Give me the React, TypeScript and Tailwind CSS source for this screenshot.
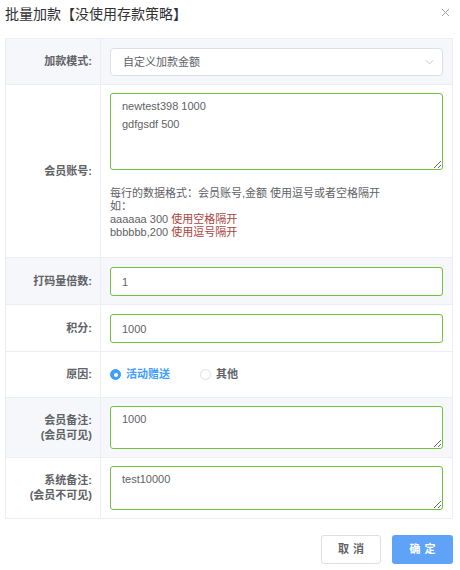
import React from 'react';

const font = { fontFamily: '"Liberation Sans", "Noto Sans CJK SC", sans-serif' };

function Row({
  label,
  grey,
  children,
  cellClass = 'pt-[9px] pb-[8px]',
}: {
  label: React.ReactNode;
  grey?: boolean;
  children: React.ReactNode;
  cellClass?: string;
}) {
  return (
    <div className={`flex border-b border-[#ebeef5] last:border-b-0 ${grey ? 'bg-[#f5f7fa]' : 'bg-white'}`}>
      <div className="w-[95px] shrink-0 border-r border-[#ebeef5] flex items-center justify-end pr-[8px] text-right text-[11px] leading-[15px] font-bold text-[#606266]">
        {label}
      </div>
      <div className={`flex-1 pl-[9px] pr-[9px] ${cellClass}`}>{children}</div>
    </div>
  );
}

function Radio({ checked, label }: { checked?: boolean; label: string }) {
  return (
    <label className="flex items-center gap-[5px]">
      <span
        className={`w-[11px] h-[11px] rounded-full flex items-center justify-center border ${
          checked ? 'bg-[#409eff] border-[#409eff]' : 'bg-white border-[#dcdfe6]'
        }`}
      >
        {checked && <span className="w-[4px] h-[4px] rounded-full bg-white" />}
      </span>
      <span className={`text-[11px] font-bold ${checked ? 'text-[#409eff]' : 'text-[#606266]'}`}>{label}</span>
    </label>
  );
}

export default function App() {
  const inputCls =
    'w-full h-[29px] border border-[#72c140] rounded-[3px] bg-white px-[11px] text-[11px] text-[#606266] outline-none';
  const areaCls =
    'block w-full border border-[#72c140] rounded-[3px] bg-white px-[11px] pt-[3px] text-[11px] leading-[18px] text-[#606266] outline-none';

  return (
    <div className="w-[460px] h-[570px] bg-white relative" style={font}>
      {/* Header */}
      <div className="flex items-center justify-between h-[28px] pl-[5px] pr-[10px]">
        <h2 className="text-[14px] font-normal text-[#303133] leading-[28px]">批量加款【没使用存款策略】</h2>
        <svg width="9" height="9" viewBox="0 0 10 10" className="-mt-[4px]">
          <path d="M1 1L9 9M9 1L1 9" stroke="#909399" strokeWidth="1" />
        </svg>
      </div>

      {/* Form table */}
      <div className="mt-[10px] mx-[5px] w-[448px] border border-[#ebeef5]">
        <Row label="加款模式:" grey>
          <div className="h-[28px] border border-[#dcdfe6] rounded-[4px] bg-white flex items-center justify-between pl-[12px] pr-[8px]">
            <span className="text-[11px] text-[#606266]">自定义加款金额</span>
            <svg width="9" height="6" viewBox="0 0 10 6">
              <path d="M1 1L5 5L9 1" fill="none" stroke="#c0c4cc" strokeWidth="1" />
            </svg>
          </div>
        </Row>

        <Row label="会员账号:" cellClass="pt-[8px] pb-[18px]">
          <textarea className={`${areaCls} h-[77px]`} defaultValue={'newtest398 1000\ngdfgsdf 500'} />
          <div className="mt-[17px] text-[11px] leading-[13px] text-[#606266]">
            <div>每行的数据格式：会员账号,金额 使用逗号或者空格隔开</div>
            <div>如：</div>
            <div>
              aaaaaa 300 <span className="text-[#a94442]">使用空格隔开</span>
            </div>
            <div>
              bbbbbb,200 <span className="text-[#a94442]">使用逗号隔开</span>
            </div>
          </div>
        </Row>

        <Row label="打码量倍数:" grey>
          <input className={inputCls} defaultValue="1" />
        </Row>

        <Row label="积分:">
          <input className={inputCls} defaultValue="1000" />
        </Row>

        <Row label="原因:" cellClass="h-[45px] flex items-center gap-[30px] pl-[8px]">
          <Radio checked label="活动赠送" />
          <Radio label="其他" />
        </Row>

        <Row
          grey
          label={
            <span>
              会员备注:
              <br />
              (会员可见)
            </span>
          }
          cellClass="py-[8px]"
        >
          <textarea className={`${areaCls} h-[43px]`} defaultValue="1000" />
        </Row>

        <Row
          label={
            <span>
              系统备注:
              <br />
              (会员不可见)
            </span>
          }
          cellClass="py-[8px]"
        >
          <textarea className={`${areaCls} h-[44px]`} defaultValue="test10000" />
        </Row>
      </div>

      {/* Footer */}
      <div className="flex justify-end gap-[11px] mt-[16px] pr-[7px]">
        <button className="w-[60px] h-[29px] border border-[#dcdfe6] rounded-[3px] bg-white text-[11px] font-bold text-[#606266] tracking-[4px] pl-[4px]">
          取消
        </button>
        <button className="w-[61px] h-[29px] rounded-[3px] bg-[#5fa3f8] text-[11px] font-bold text-white tracking-[4px] pl-[4px]">
          确定
        </button>
      </div>
    </div>
  );
}
